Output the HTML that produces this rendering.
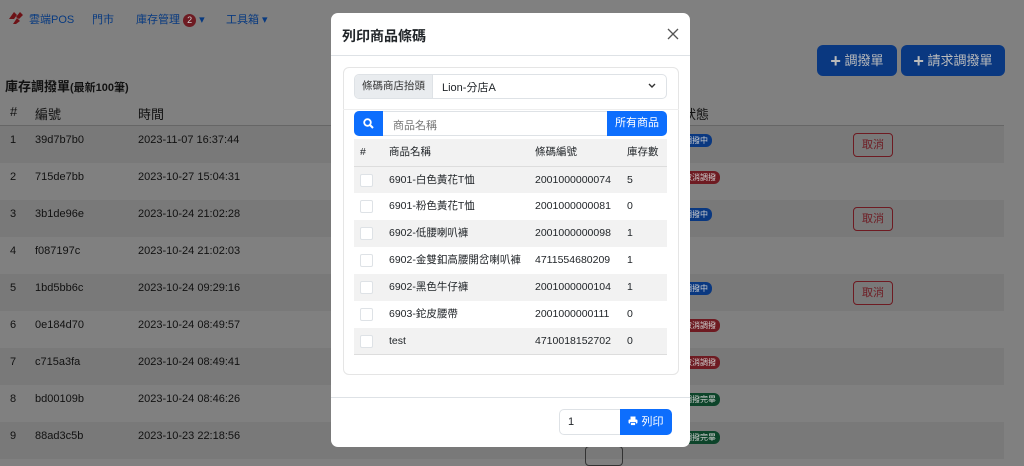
<!DOCTYPE html>
<html><head><meta charset="utf-8"><style>
*{box-sizing:border-box;margin:0;padding:0}
body{width:1024px;height:461px;overflow:hidden;position:relative;background:#808080;font-family:"Liberation Sans","Noto Sans CJK TC",sans-serif;font-size:11px;color:#111}
.a{position:absolute;white-space:nowrap}
.nav{color:#083a80;font-size:11px}
.bg-row{position:absolute;left:0;width:1004px;height:37px}
.st{background:#797979}
.badge{position:absolute;border-radius:6px;color:#ccc;font-size:8px;padding:1px 4px;height:13px;line-height:11px}
.cancel{position:absolute;left:853px;width:40px;height:24px;border:1px solid #6e1b22;border-radius:4px;color:#6e1b22;font-size:11px;line-height:22px;text-align:center}
.modal{position:absolute;left:331px;top:13px;width:359px;height:434px;background:#fff;border-radius:7px;color:#212529}
.mr{position:absolute;left:23px;width:313px;height:27px;font-size:10.5px;line-height:27px}
.cb{position:absolute;left:6px;top:7px;width:13px;height:13px;border:1px solid #dee2e6;border-radius:2px;background:#fff}
</style></head><body>
<svg class="a" style="left:8px;top:11px" width="16" height="14" viewBox="0 0 16 14"><path d="M1 8 L6 1 L9 4 L6 8Z M5 13 L9 7 L12 10 L8 13Z M8 6 L12 1 L15 4 L11 8Z" fill="#6d1216"/></svg>
<div class="a nav" style="left:29px;top:11px">雲端POS</div>
<div class="a nav" style="left:92px;top:11px">門市</div>
<div class="a nav" style="left:136px;top:11px">庫存管理 <span style="display:inline-block;background:#6e1b22;color:#ccc;border-radius:7px;font-size:9px;padding:0 4px;line-height:13px">2</span> ▾</div>
<div class="a nav" style="left:226px;top:11px">工具箱 ▾</div>
<div class="a" style="left:817px;top:45px;width:80px;height:31px;background:#0a3880;border-radius:6px;color:#bbb;font-size:13px;line-height:31px;text-align:center"><b style="font-size:18px;vertical-align:-2px">+</b> 調撥單</div>
<div class="a" style="left:901px;top:45px;width:104px;height:31px;background:#0a3880;border-radius:6px;color:#bbb;font-size:13px;line-height:31px;text-align:center"><b style="font-size:18px;vertical-align:-2px">+</b> 請求調撥單</div>
<div class="a" style="left:5px;top:76px;font-size:13px;font-weight:bold">庫存調撥單<span style="font-size:11px">(最新100筆)</span></div>
<div class="a" style="left:10px;top:104px;font-size:13px">#</div>
<div class="a" style="left:35px;top:104px;font-size:13px">編號</div>
<div class="a" style="left:138px;top:104px;font-size:13px">時間</div>
<div class="a" style="left:683px;top:104px;font-size:13px">狀態</div>
<div class="a" style="left:0;top:125px;width:1004px;border-top:1px solid #666"></div>
<div class="bg-row st" style="top:126px"></div><div class="bg-row st" style="top:200px"></div><div class="bg-row st" style="top:274px"></div><div class="bg-row st" style="top:348px"></div><div class="bg-row st" style="top:422px"></div>
<div class="a" style="left:10px;top:134px">1</div><div class="a" style="left:35px;top:134px">39d7b7b0</div><div class="a" style="left:138px;top:134px">2023-11-07 16:37:44</div>
<div class="a" style="left:10px;top:171px">2</div><div class="a" style="left:35px;top:171px">715de7bb</div><div class="a" style="left:138px;top:171px">2023-10-27 15:04:31</div>
<div class="a" style="left:10px;top:208px">3</div><div class="a" style="left:35px;top:208px">3b1de96e</div><div class="a" style="left:138px;top:208px">2023-10-24 21:02:28</div>
<div class="a" style="left:10px;top:245px">4</div><div class="a" style="left:35px;top:245px">f087197c</div><div class="a" style="left:138px;top:245px">2023-10-24 21:02:03</div>
<div class="a" style="left:10px;top:282px">5</div><div class="a" style="left:35px;top:282px">1bd5bb6c</div><div class="a" style="left:138px;top:282px">2023-10-24 09:29:16</div>
<div class="a" style="left:10px;top:319px">6</div><div class="a" style="left:35px;top:319px">0e184d70</div><div class="a" style="left:138px;top:319px">2023-10-24 08:49:57</div>
<div class="a" style="left:10px;top:356px">7</div><div class="a" style="left:35px;top:356px">c715a3fa</div><div class="a" style="left:138px;top:356px">2023-10-24 08:49:41</div>
<div class="a" style="left:10px;top:393px">8</div><div class="a" style="left:35px;top:393px">bd00109b</div><div class="a" style="left:138px;top:393px">2023-10-24 08:46:26</div>
<div class="a" style="left:10px;top:430px">9</div><div class="a" style="left:35px;top:430px">88ad3c5b</div><div class="a" style="left:138px;top:430px">2023-10-23 22:18:56</div>
<div class="badge" style="left:680px;top:134px;background:#0a3880">調撥中</div>
<div class="badge" style="left:680px;top:171px;background:#6e1b22">取消調撥</div>
<div class="badge" style="left:680px;top:208px;background:#0a3880">調撥中</div>
<div class="badge" style="left:680px;top:282px;background:#0a3880">調撥中</div>
<div class="badge" style="left:680px;top:319px;background:#6e1b22">取消調撥</div>
<div class="badge" style="left:680px;top:356px;background:#6e1b22">取消調撥</div>
<div class="badge" style="left:680px;top:393px;background:#0d442a">調撥完畢</div>
<div class="badge" style="left:680px;top:431px;background:#0d442a">調撥完畢</div>
<div class="cancel" style="top:133px">取消</div><div class="cancel" style="top:207px">取消</div><div class="cancel" style="top:281px">取消</div>
<div class="a" style="left:585px;top:446px;width:38px;height:20px;border:1px solid #333;border-radius:4px"></div>
<div class="modal">
 <div class="a" style="left:11px;top:13px;font-size:14px;font-weight:bold">列印商品條碼</div>
 <svg class="a" style="left:336px;top:15px" width="12" height="12" viewBox="0 0 12 12"><path d="M1 1L11 11M11 1L1 11" stroke="#555" stroke-width="1.3"/></svg>
 <div class="a" style="left:0;top:42px;width:359px;border-top:1px solid #dee2e6"></div>
 <div class="a" style="left:12px;top:54px;width:336px;height:308px;border:1px solid #e5e5e5;border-radius:6px"></div>
 <div class="a" style="left:23px;top:61px;width:313px;height:25px;border:1px solid #dee2e6;border-radius:5px"></div>
 <div class="a" style="left:24px;top:62px;width:78px;height:23px;background:#e9ecef;border-right:1px solid #dee2e6;border-radius:4px 0 0 4px;font-size:10.5px;line-height:23px;text-align:center;color:#333">條碼商店抬頭</div>
 <div class="a" style="left:111px;top:66px;font-size:11px">Lion-分店A</div>
 <svg class="a" style="left:317px;top:70px" width="8" height="6" viewBox="0 0 8 6"><path d="M1 1L4 4L7 1" stroke="#333" stroke-width="1.4" fill="none"/></svg>
 <div class="a" style="left:12px;top:96px;width:336px;border-top:1px solid #eee"></div>
 <div class="a" style="left:23px;top:98px;width:312px;height:25px;border:1px solid #dee2e6;border-radius:5px"></div>
 <div class="a" style="left:23px;top:98px;width:29px;height:25px;background:#0d6efd;border-radius:5px 0 0 5px"></div>
 <svg class="a" style="left:32px;top:105px" width="11" height="11" viewBox="0 0 11 11"><circle cx="4.5" cy="4.5" r="3.3" stroke="#fff" stroke-width="1.8" fill="none"/><path d="M7 7L10 10" stroke="#fff" stroke-width="2"/></svg>
 <div class="a" style="left:62px;top:104px;color:#777;font-size:11px">商品名稱</div>
 <div class="a" style="left:276px;top:98px;width:60px;height:25px;background:#0d6efd;border-radius:0 5px 5px 0;color:#fff;font-size:11px;line-height:25px;text-align:center">所有商品</div>
 <div class="mr" style="top:126px;background:#f2f2f2"><span class="a" style="left:6px">#</span><span class="a" style="left:35px">商品名稱</span><span class="a" style="left:181px">條碼編號</span><span class="a" style="left:273px">庫存數</span></div>
 <div class="mr" style="top:153px;background:#f2f2f2;border-top:1px solid #ddd"><span class="cb"></span><span class="a" style="left:35px">6901-白色黃花T恤</span><span class="a" style="left:181px">2001000000074</span><span class="a" style="left:273px">5</span></div>
 <div class="mr" style="top:180px"><span class="cb"></span><span class="a" style="left:35px">6901-粉色黃花T恤</span><span class="a" style="left:181px">2001000000081</span><span class="a" style="left:273px">0</span></div>
 <div class="mr" style="top:207px;background:#f2f2f2"><span class="cb"></span><span class="a" style="left:35px">6902-低腰喇叭褲</span><span class="a" style="left:181px">2001000000098</span><span class="a" style="left:273px">1</span></div>
 <div class="mr" style="top:234px"><span class="cb"></span><span class="a" style="left:35px">6902-金雙釦高腰開岔喇叭褲</span><span class="a" style="left:181px">4711554680209</span><span class="a" style="left:273px">1</span></div>
 <div class="mr" style="top:261px;background:#f2f2f2"><span class="cb"></span><span class="a" style="left:35px">6902-黑色牛仔褲</span><span class="a" style="left:181px">2001000000104</span><span class="a" style="left:273px">1</span></div>
 <div class="mr" style="top:288px"><span class="cb"></span><span class="a" style="left:35px">6903-鉈皮腰帶</span><span class="a" style="left:181px">2001000000111</span><span class="a" style="left:273px">0</span></div>
 <div class="mr" style="top:315px;background:#f2f2f2;border-bottom:1px solid #ddd"><span class="cb"></span><span class="a" style="left:35px">test</span><span class="a" style="left:181px">4710018152702</span><span class="a" style="left:273px">0</span></div>
 <div class="a" style="left:0;top:384px;width:359px;border-top:1px solid #dee2e6"></div>
 <div class="a" style="left:228px;top:396px;width:62px;height:26px;border:1px solid #dee2e6;border-radius:5px 0 0 5px;padding-left:8px;line-height:24px;font-size:11px">1</div>
 <div class="a" style="left:289px;top:396px;width:52px;height:26px;background:#0d6efd;border-radius:0 5px 5px 0;color:#fff;font-size:11px;line-height:26px;text-align:center"><svg width="10" height="10" viewBox="0 0 10 10" style="vertical-align:-1px"><rect x="2.5" y="0.5" width="5" height="3" fill="#fff"/><rect x="0.5" y="3.5" width="9" height="4" rx="1" fill="#fff"/><rect x="2.5" y="6.5" width="5" height="3" fill="#fff" stroke="#0d6efd" stroke-width=".8"/></svg> 列印</div>
</div>
</body></html>
